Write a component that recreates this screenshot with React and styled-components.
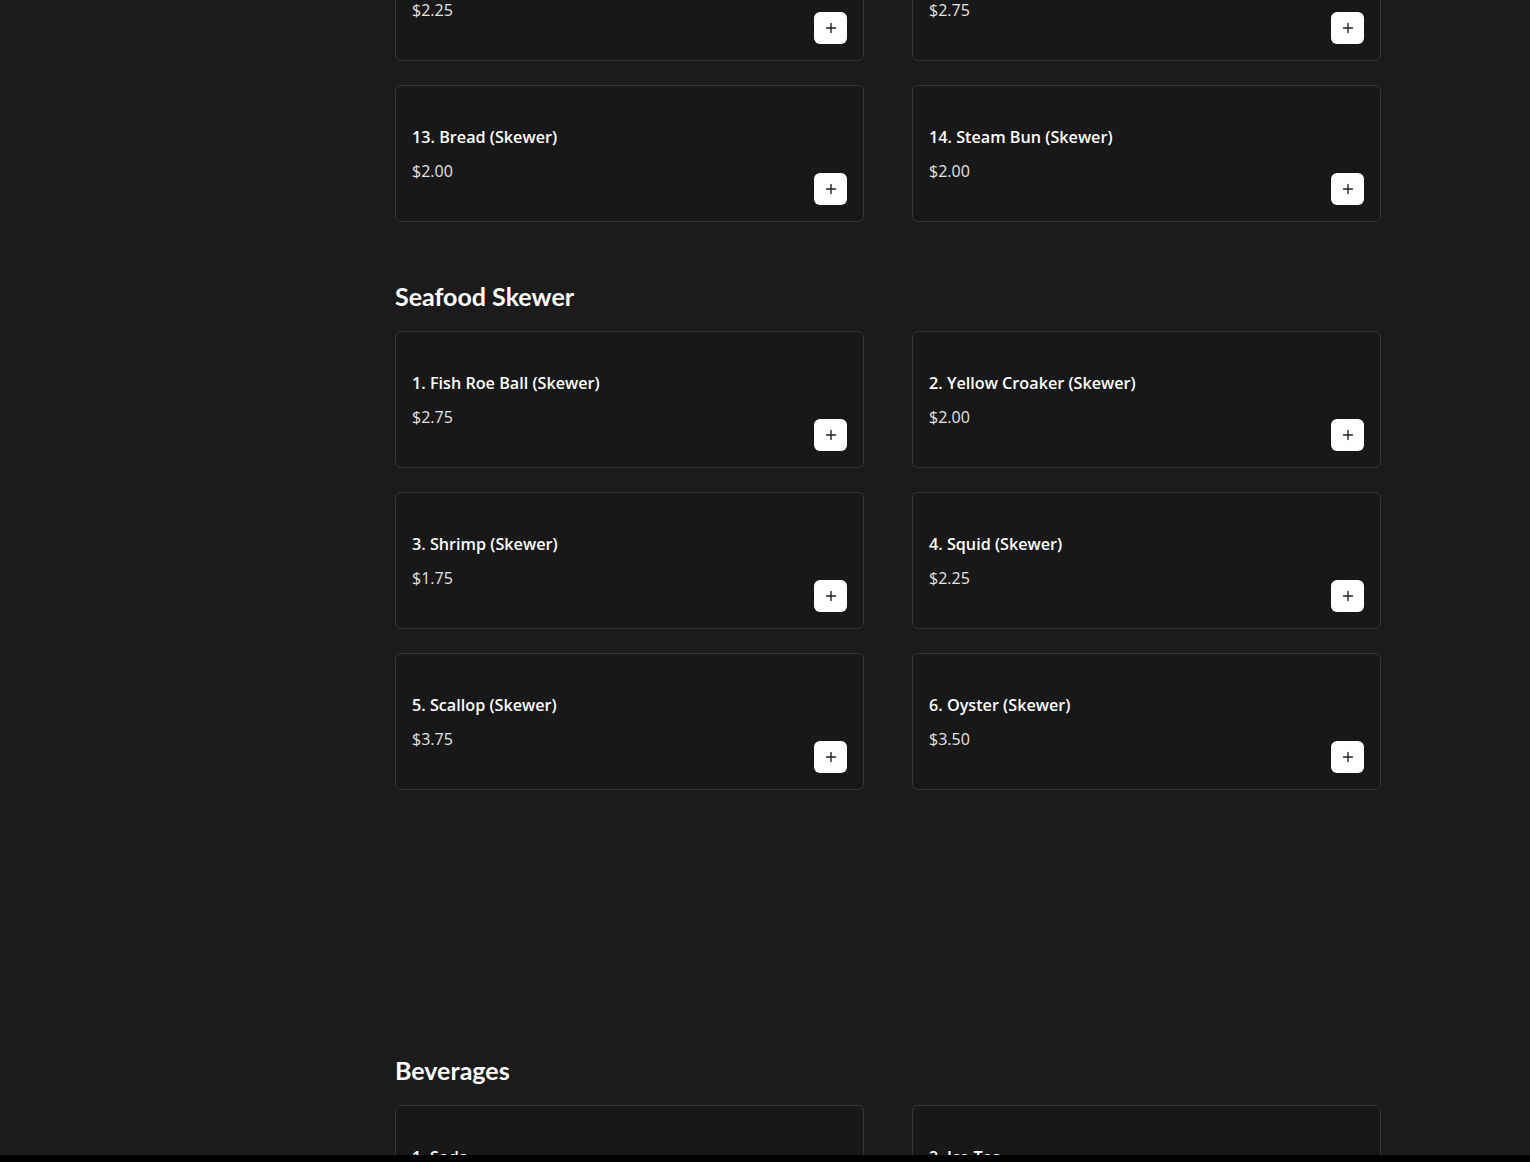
import React from 'react';
import styled, { createGlobalStyle } from 'styled-components';

const GlobalStyle = createGlobalStyle`
  html, body {
    margin: 0;
    padding: 0;
    background: #1b1b1b;
    color: #ffffff;
    font-family: 'Open Sans', 'Noto Sans', sans-serif;
  }
  * {
    box-sizing: border-box;
  }
`;

const sections = [
  {
    title: 'Vegetable Skewer',
    hidden: true,
    items: [
      { name: '11. Corn (Skewer)', price: '$2.25' },
      { name: '12. Rice Cake (Skewer)', price: '$2.75' },
      { name: '13. Bread (Skewer)', price: '$2.00' },
      { name: '14. Steam Bun (Skewer)', price: '$2.00' },
    ],
  },
  {
    title: 'Seafood Skewer',
    extra: 206,
    items: [
      { name: '1. Fish Roe Ball (Skewer)', price: '$2.75' },
      { name: '2. Yellow Croaker (Skewer)', price: '$2.00' },
      { name: '3. Shrimp (Skewer)', price: '$1.75' },
      { name: '4. Squid (Skewer)', price: '$2.25' },
      { name: '5. Scallop (Skewer)', price: '$3.75' },
      { name: '6. Oyster (Skewer)', price: '$3.50' },
    ],
  },
  {
    title: 'Beverages',
    items: [
      { name: '1. Soda', price: '$2.00' },
      { name: '2. Ice Tea', price: '$3.00' },
    ],
  },
];

function PlusIcon() {
  return (
    <svg width="12" height="12" viewBox="0 0 12 12" fill="none">
      <path d="M6 1.5v9M1.5 6h9" stroke="#222" strokeWidth="1.4" strokeLinecap="round" />
    </svg>
  );
}

function App() {
  return (
    <>
      <GlobalStyle />
      <StPage>
        <StMenu>
          {sections.map((section) => (
            <StSection key={section.title} $extra={section.extra}>
              {!section.hidden && <StHeading>{section.title}</StHeading>}
              <StGrid>
                {section.items.map((item) => (
                  <StCard key={item.name}>
                    <StName>{item.name}</StName>
                    <StBottom>
                      <StPrice>{item.price}</StPrice>
                      <StAddButton aria-label={`Add ${item.name}`}>
                        <PlusIcon />
                      </StAddButton>
                    </StBottom>
                  </StCard>
                ))}
              </StGrid>
            </StSection>
          ))}
        </StMenu>
      </StPage>
      <StBottomBar />
    </>
  );
}

export default App;

const StPage = styled.main`
  min-height: 100vh;
  background: #1b1b1b;
  overflow: hidden;
`;

const StMenu = styled.div`
  width: 986px;
  margin: -76px 0 0 395px;
  display: flex;
  flex-direction: column;
`;

const StSection = styled.section`
  display: flex;
  flex-direction: column;
  margin-bottom: ${(p) => 59 + (p.$extra || 0)}px;
`;

const StHeading = styled.h2`
  margin: 0 0 20px;
  font-family: 'Lato', 'Open Sans', sans-serif;
  font-size: 25px;
  line-height: 30px;
  font-weight: 700;
  letter-spacing: 0;
  color: #ffffff;
`;

const StGrid = styled.div`
  display: grid;
  grid-template-columns: 1fr 1fr;
  column-gap: 48px;
  row-gap: 24px;
`;

const StCard = styled.div`
  height: 137px;
  padding: 41px 16px 15px 16px;
  background: #181818;
  border: 1px solid #363636;
  border-radius: 6px;
  display: flex;
  flex-direction: column;
`;

const StName = styled.h3`
  margin: 0;
  font-size: 16.2px;
  line-height: 20px;
  font-weight: 600;
  color: #ffffff;
`;

const StBottom = styled.div`
  margin-top: 14px;
  display: flex;
  justify-content: space-between;
  align-items: flex-start;
`;

const StPrice = styled.span`
  font-size: 16px;
  line-height: 20px;
  color: #e4e4e4;
`;

const StAddButton = styled.button`
  margin-top: 12px;
  width: 33px;
  height: 32px;
  padding: 0;
  border: none;
  border-radius: 6px;
  background: #ffffff;
  display: flex;
  align-items: center;
  justify-content: center;
  cursor: pointer;
`;

const StBottomBar = styled.div`
  position: fixed;
  left: 0;
  right: 0;
  bottom: 0;
  height: 7px;
  background: #000000;
`;
